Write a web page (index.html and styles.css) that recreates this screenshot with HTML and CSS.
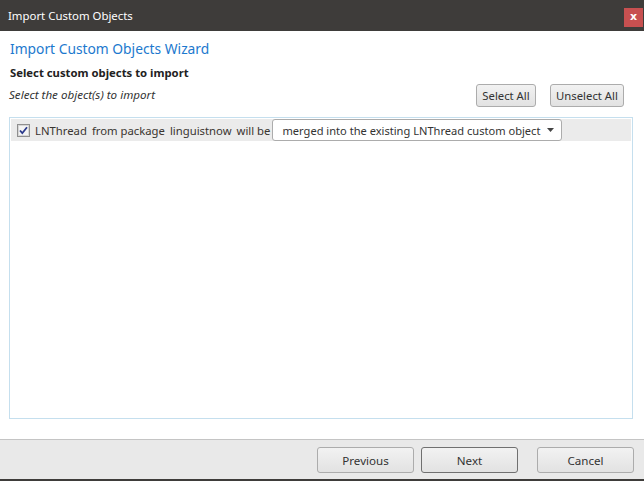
FILE: index.html
```html
<!DOCTYPE html>
<html>
<head>
<meta charset="utf-8">
<link rel="stylesheet" href="styles.css">
</head>
<body>
<div class="window">
  <div class="titlebar">
    <span class="title">Import Custom Objects</span>
    <span class="close">x</span>
  </div>
  <div class="content">
    <div class="wizard-title">Import Custom Objects Wizard</div>
    <div class="subtitle">Select custom objects to import</div>
    <div class="toolbar">
      <span class="hint">Select the object(s) to import</span>
      <div class="tool-buttons">
        <button class="btn btn-small btn-select">Select All</button>
        <button class="btn btn-small btn-unselect">Unselect All</button>
      </div>
    </div>
    <div class="list">
      <div class="row">
        <span class="check">
          <svg width="13" height="13" viewBox="0 0 13 13">
            <rect x="0.5" y="0.5" width="12" height="12" fill="#fff" stroke="#8f8f8f"/>
            <rect x="1.5" y="1.5" width="10" height="10" fill="#f4f4f4" stroke="#d6d6d6"/>
            <path d="M3 6.5 L5.3 9.2 L10 3.2" fill="none" stroke="#2b3a8c" stroke-width="1.8"/>
          </svg>
        </span>
        <span class="lbl">LNThread</span>
        <span class="lbl">from package</span>
        <span class="lbl">linguistnow</span>
        <span class="lbl">will be</span>
        <span class="select">
          <span class="select-text">merged into the existing LNThread custom object</span>
          <svg class="caret" width="7" height="4" viewBox="0 0 7 4"><path d="M0 0 H7 L3.5 4 Z" fill="#444"/></svg>
        </span>
      </div>
    </div>
  </div>
  <div class="footer">
    <button class="btn btn-foot">Previous</button>
    <button class="btn btn-foot btn-focus">Next</button>
    <button class="btn btn-foot btn-cancel">Cancel</button>
  </div>
</div>
</body>
</html>
```
FILE: styles.css
```css
html, body {
  margin: 0;
  padding: 0;
  background: #fff;
}
body {
  font-family: "Noto Sans", "Open Sans", sans-serif;
  color: #333;
}
.window {
  width: 644px;
  height: 481px;
  display: flex;
  flex-direction: column;
  overflow: hidden;
}
.titlebar {
  height: 31px;
  background: #3e3c3a;
  display: flex;
  align-items: flex-start;
  justify-content: space-between;
  flex-shrink: 0;
}
.title {
  color: #fff;
  font-size: 11.4px;
  padding-left: 8px;
  line-height: 31px;
}
.close {
  margin-top: 8px;
  margin-right: 1px;
  width: 19px;
  height: 19px;
  background: #c75050;
  color: #fff;
  font-weight: bold;
  font-size: 11px;
  line-height: 17px;
  text-align: center;
  font-family: "DejaVu Sans", sans-serif;
}
.content {
  flex: 1;
  display: flex;
  flex-direction: column;
  padding: 8px 11px 20px 9px;
}
.wizard-title {
  color: #1c79ce;
  font-size: 13.8px;
  line-height: 20px;
  padding-left: 1px;
}
.subtitle {
  font-weight: bold;
  color: #222;
  font-size: 11.3px;
  line-height: 16px;
  margin-top: 6px;
  padding-left: 1px;
}
.toolbar {
  display: flex;
  justify-content: space-between;
  align-items: flex-start;
  margin-top: 3px;
}
.hint {
  font-style: italic;
  font-size: 11.6px;
  color: #333;
  line-height: 16px;
  margin-top: 3px;
}
.tool-buttons {
  display: flex;
  gap: 14px;
  margin-top: 0;
  padding-right: 9px;
}
.btn {
  font-family: "Noto Sans", "Open Sans", sans-serif;
  border: 1px solid #acacac;
  border-radius: 3px;
  background: linear-gradient(#f2f2f2, #e2e2e2);
  color: #333;
  padding: 0;
  margin: 0;
}
.btn-small {
  height: 23px;
  font-size: 11.3px;
}
.btn-select { width: 60px; }
.btn-unselect { width: 74px; }
.list {
  flex: 1;
  margin-top: 10px;
  border: 1px solid #c5dfee;
  padding: 1px 1px;
}
.row {
  height: 22px;
  background: #ebebeb;
  display: flex;
  align-items: center;
  gap: 5px;
  padding-left: 6px;
  font-size: 11.3px;
  color: #3a3530;
  white-space: nowrap;
}
.check {
  display: flex;
  width: 13px;
  height: 13px;
  margin-right: 0;
}
.select {
  margin-left: -3px;
  width: 290px;
  height: 22px;
  flex-shrink: 0;
  border: 1px solid #acacac;
  border-radius: 3px;
  background: #fff;
  display: flex;
  align-items: center;
  justify-content: space-between;
  padding: 0 7px 0 9px;
  box-sizing: border-box;
  color: #333;
  font-size: 11.1px;
}
.footer {
  height: 39px;
  flex-shrink: 0;
  background: #e9e9e9;
  border-top: 1px solid #c4c4c4;
  border-bottom: 2px solid #3e3c3a;
  display: flex;
  align-items: center;
  justify-content: flex-end;
  padding-right: 10px;
  gap: 7px;
}
.btn-foot {
  width: 97px;
  height: 26px;
  font-size: 11.6px;
  margin-top: 1px;
}
.btn-focus {
  border-color: #707070;
}
.btn-cancel {
  margin-left: 12px;
}
```
